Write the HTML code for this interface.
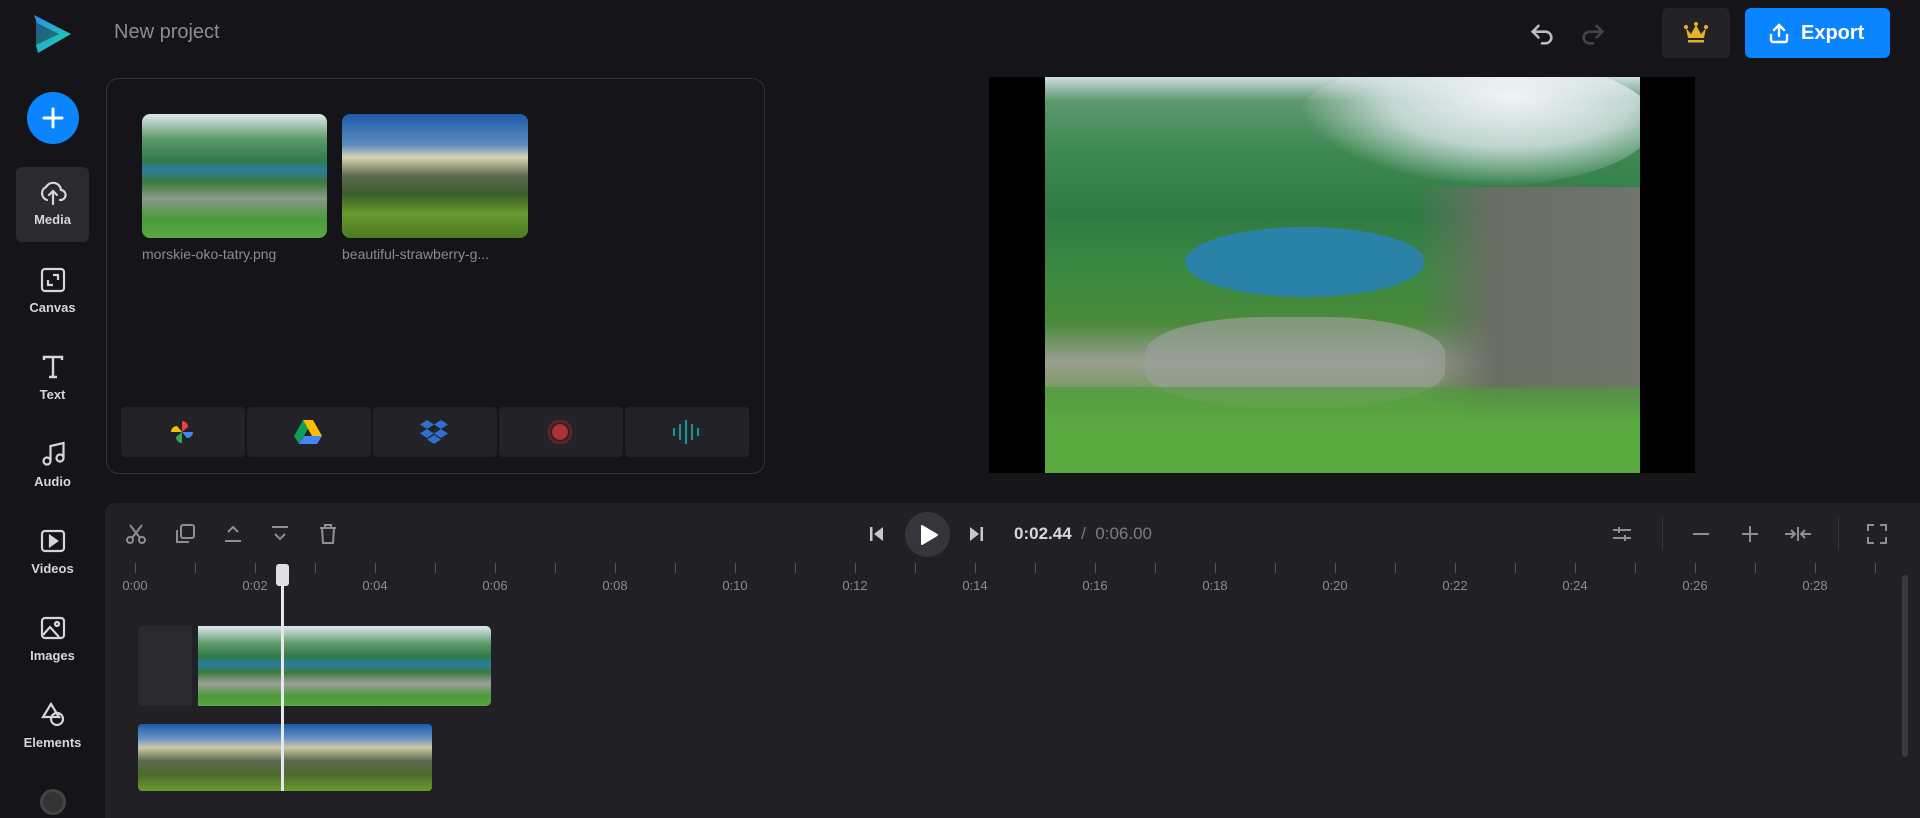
<!DOCTYPE html>
<html><head><meta charset="utf-8"><style>
*{margin:0;padding:0;box-sizing:border-box}
body{width:1920px;height:818px;background:#151519;font-family:"Liberation Sans",sans-serif;overflow:hidden;position:relative;color:#ddd}
.a{position:absolute}
.side{position:absolute;left:16px;width:73px;text-align:center;font-size:13px;font-weight:bold;color:#d6d6da}
.side svg{display:block;margin:0 auto 6px}
.thumb1{background:linear-gradient(180deg,#dfe9ef 0%,#5f9a6a 20%,#2f7a4a 38%,#2a7da0 45%,#3c7a3a 55%,#8a9a8a 68%,#4a9a3a 85%,#5aa840 100%)}
.thumb2{background:linear-gradient(180deg,#1d5aa8 0%,#5c8cc0 25%,#d9d2b0 35%,#5b6a50 50%,#3c5c2a 65%,#6a9a30 80%,#4c7a20 100%)}
.cell{position:absolute;top:0;height:50px;width:124px;background:#222227;border-radius:4px}
.tick{position:absolute;top:563px;width:1px;height:10px;background:#555}
.lbl{position:absolute;top:578px;font-size:13px;color:#8a8a90;transform:translateX(-50%)}
.ic{position:absolute;stroke:#8e8e94;fill:none;stroke-width:2}
</style></head><body>
<svg class="a" style="left:34px;top:15px" width="37" height="38" viewBox="0 0 37 38"><defs><linearGradient id="lg" x1="0" y1="0" x2="1" y2="1"><stop offset="0" stop-color="#2a8cf0"/><stop offset="1" stop-color="#1ed6a0"/></linearGradient></defs><path d="M0 0 L37 19 L4 38 L2 30 L25 19 L3 8 Z" fill="url(#lg)"/><path d="M2 6 L25 19 L2 32 Z" fill="url(#lg)" opacity=".55"/></svg>
<div class="a" style="left:114px;top:21px;font-size:20px;color:#8c8c92">New project</div>
<svg class="a" style="left:1528px;top:20px" width="28" height="28" viewBox="0 0 24 24" fill="none" stroke="#bbb" stroke-width="2.2" stroke-linecap="round"><path d="M9 5 L4 10 L9 15"/><path d="M4 10 H15 a5 5 0 0 1 0 10 H12"/></svg>
<svg class="a" style="left:1579px;top:20px" width="28" height="28" viewBox="0 0 24 24" fill="none" stroke="#444" stroke-width="2.2" stroke-linecap="round"><path d="M15 5 L20 10 L15 15"/><path d="M20 10 H9 a5 5 0 0 0 0 10 H12"/></svg>
<div class="a" style="left:1662px;top:8px;width:68px;height:50px;background:#222227;border-radius:6px"></div>
<svg class="a" style="left:1684px;top:22px" width="24" height="22" viewBox="0 0 24 22"><path d="M2 6 L7 12 L12 3 L17 12 L22 6 L20 16 H4 Z" fill="#e2b02c"/><circle cx="2" cy="5" r="2" fill="#e2b02c"/><circle cx="12" cy="2" r="2" fill="#e2b02c"/><circle cx="22" cy="5" r="2" fill="#e2b02c"/><rect x="4" y="18" width="16" height="2.5" fill="#e2b02c"/></svg>
<div class="a" style="left:1745px;top:8px;width:145px;height:50px;background:#0a84ff;border-radius:6px;color:#fff;font-weight:bold;font-size:20px;line-height:50px;padding-left:56px">Export</div>
<svg class="a" style="left:1768px;top:22px" width="22" height="22" viewBox="0 0 22 22" fill="none" stroke="#fff" stroke-width="2.4" stroke-linecap="round"><path d="M11 14 V3 M6 8 L11 3 L16 8"/><path d="M3 13 V18 a2 2 0 0 0 2 2 H17 a2 2 0 0 0 2 -2 V13"/></svg>
<div class="a" style="left:27px;top:92px;width:52px;height:52px;border-radius:50%;background:#0a84ff"></div>
<svg class="a" style="left:40px;top:105px" width="26" height="26" viewBox="0 0 26 26" stroke="#fff" stroke-width="3" stroke-linecap="round"><path d="M13 4 V22 M4 13 H22"/></svg>
<div class="a" style="left:16px;top:167px;width:73px;height:75px;background:#2a2a2f;border-radius:6px"></div>
<div class="side" style="top:178px"><svg width="30" height="28" viewBox="0 0 30 28" fill="none" stroke="#d6d6da" stroke-width="2.2" stroke-linecap="round"><path d="M9 22 a7 7 0 0 1 -1 -13 a8 8 0 0 1 15 3 a5 5 0 0 1 -1 10"/><path d="M15 26 V13 M11 17 L15 13 L19 17"/></svg>Media</div>
<div class="side" style="top:266px"><svg width="28" height="28" viewBox="0 0 28 28" fill="none" stroke="#d6d6da" stroke-width="2.2"><rect x="3" y="3" width="22" height="22" rx="3"/><path d="M9 14 v5 h5 M19 14 v-5 h-5"/></svg>Canvas</div>
<div class="side" style="top:353px"><svg width="28" height="28" viewBox="0 0 28 28" fill="none" stroke="#d6d6da" stroke-width="2.4"><path d="M5 7 V4 H23 V7 M14 4 V24 M10 24 H18"/></svg>Text</div>
<div class="side" style="top:440px"><svg width="28" height="28" viewBox="0 0 28 28" fill="none" stroke="#d6d6da" stroke-width="2.2"><circle cx="8" cy="21" r="3.5"/><circle cx="21" cy="18" r="3.5"/><path d="M11.5 21 V6 L24.5 3 V18"/></svg>Audio</div>
<div class="side" style="top:527px"><svg width="28" height="28" viewBox="0 0 28 28" fill="none" stroke="#d6d6da" stroke-width="2.2"><rect x="3" y="4" width="22" height="20" rx="3"/><path d="M11 9 L18 14 L11 19 Z" fill="#d6d6da"/></svg>Videos</div>
<div class="side" style="top:614px"><svg width="28" height="28" viewBox="0 0 28 28" fill="none" stroke="#d6d6da" stroke-width="2.2"><rect x="3" y="4" width="22" height="20" rx="3"/><circle cx="18" cy="10" r="2"/><path d="M4 21 L11 13 L20 23"/></svg>Images</div>
<div class="side" style="top:701px"><svg width="28" height="28" viewBox="0 0 28 28" fill="none" stroke="#d6d6da" stroke-width="2.2"><path d="M12 3 L4 16 H20 Z"/><circle cx="18" cy="18" r="6"/></svg>Elements</div>
<div class="a" style="left:40px;top:789px;width:26px;height:26px;border-radius:50%;border:3px solid #444;background:#333"></div>
<div class="a" style="left:106px;top:78px;width:659px;height:396px;border:1px solid #303036;border-radius:13px"></div>
<div class="a thumb1" style="left:142px;top:114px;width:185px;height:124px;border-radius:8px"></div>
<div class="a thumb2" style="left:342px;top:114px;width:186px;height:124px;border-radius:8px"></div>
<div class="a" style="left:142px;top:246px;font-size:14px;color:#8a8a90">morskie-oko-tatry.png</div>
<div class="a" style="left:342px;top:246px;font-size:14px;color:#8a8a90">beautiful-strawberry-g...</div>
<div class="a" style="left:121px;top:407px;width:628px;height:50px">
<div class="cell" style="left:0"></div><div class="cell" style="left:126px"></div><div class="cell" style="left:252px"></div><div class="cell" style="left:378px"></div><div class="cell" style="left:504px"></div>
</div>
<svg class="a" style="left:169px;top:419px" width="26" height="26" viewBox="0 0 26 26"><path d="M13 13 V2 a6 6 0 0 1 6 6 Z" fill="#e94235"/><path d="M13 13 H24 a6 6 0 0 1 -6 6 Z" fill="#4285f4"/><path d="M13 13 V24 a6 6 0 0 1 -6 -6 Z" fill="#34a853"/><path d="M13 13 H2 a6 6 0 0 1 6 -6 Z" fill="#fbbc04"/></svg>
<svg class="a" style="left:294px;top:420px" width="28" height="24" viewBox="0 0 28 24"><path d="M9 0 H19 L28 16 H18 Z" fill="#fbbc04"/><path d="M9 0 L14 9 L5 24 L0 16 Z" fill="#0f9d58"/><path d="M5 24 L10 16 H28 L23 24 Z" fill="#4285f4"/></svg>
<svg class="a" style="left:420px;top:420px" width="28" height="26" viewBox="0 0 28 26" fill="#2f6fcf"><path d="M7 0 L14 4.5 L7 9 L0 4.5Z M21 0 L28 4.5 L21 9 L14 4.5Z M7 9 L14 13.5 L7 18 L0 13.5Z M21 9 L28 13.5 L21 18 L14 13.5Z M14 15 L21 19.5 L14 24 L7 19.5Z"/></svg>
<svg class="a" style="left:547px;top:419px" width="26" height="26" viewBox="0 0 26 26"><circle cx="13" cy="13" r="11" fill="none" stroke="#6a2025" stroke-width="2.5"/><circle cx="13" cy="13" r="8" fill="#a8313a"/></svg>
<svg class="a" style="left:672px;top:420px" width="28" height="24" viewBox="0 0 28 24" stroke="#1e8f96" stroke-width="2.2" stroke-linecap="round"><path d="M2 9 V15 M8 5 V19 M14 1 V23 M20 5 V19 M26 9 V15"/></svg>
<!-- preview -->
<div class="a" style="left:989px;top:77px;width:706px;height:396px;background:#000"></div>
<div class="a" style="left:1045px;top:77px;width:595px;height:396px;overflow:hidden;background:linear-gradient(180deg,#cfdde0 0%,#5e9870 6%,#3f8a54 18%,#2f7a44 35%,#3b8a40 50%,#4a8a3a 62%,#9a9e92 72%,#6a9a4a 82%,#5aa640 100%)">
<div class="a" style="left:250px;top:-20px;width:360px;height:130px;border-radius:50%;background:radial-gradient(ellipse at 60% 30%,#f0f4f6 0%,rgba(220,230,235,.8) 40%,rgba(200,214,220,0) 70%)"></div>
<div class="a" style="left:140px;top:150px;width:240px;height:70px;border-radius:50%;background:#2b82a8"></div>
<div class="a" style="left:370px;top:110px;width:225px;height:250px;background:linear-gradient(90deg,rgba(90,95,85,0),#6a6e64 35%,#70746a 100%)"></div>
<div class="a" style="left:100px;top:240px;width:300px;height:90px;border-radius:40%;background:#9aa09a;opacity:.7"></div>
<div class="a" style="left:0;top:310px;width:595px;height:86px;background:linear-gradient(180deg,rgba(74,154,58,.6),#5aa840 40%)"></div>
</div>
<!-- timeline -->
<div class="a" style="left:105px;top:503px;width:1815px;height:315px;background:#202025;border-top-left-radius:10px"></div>
<svg class="ic" style="left:124px;top:522px" width="24" height="24" viewBox="0 0 24 24" stroke="#505056"><circle cx="6" cy="18" r="3"/><circle cx="18" cy="18" r="3"/><path d="M8 16 L18 3 M16 16 L6 3"/></svg>
<svg class="ic" style="left:173px;top:522px" width="24" height="24" viewBox="0 0 24 24" stroke="#505056"><rect x="8" y="3" width="13" height="13" rx="2"/><path d="M4 8 V20 H16"/></svg>
<svg class="ic" style="left:221px;top:522px" width="24" height="24" viewBox="0 0 24 24" stroke="#505056"><path d="M7 10 L12 5 L17 10 M4 19 H20"/></svg>
<svg class="ic" style="left:268px;top:522px" width="24" height="24" viewBox="0 0 24 24" stroke="#505056"><path d="M7 12 L12 17 L17 12 M4 5 H20"/></svg>
<svg class="ic" style="left:316px;top:522px" width="24" height="24" viewBox="0 0 24 24" stroke="#505056"><path d="M4 6 H20 M9 6 V3 H15 V6 M6 6 L7 21 H17 L18 6"/></svg>
<svg class="a" style="left:868px;top:525px" width="18" height="18" viewBox="0 0 18 18" fill="#c8c8cc"><rect x="2" y="2" width="2.5" height="14"/><path d="M15 2 V16 L6 9Z"/></svg>
<div class="a" style="left:905px;top:512px;width:45px;height:45px;border-radius:50%;background:#35353b"></div>
<svg class="a" style="left:919px;top:524px" width="20" height="22" viewBox="0 0 20 22"><path d="M3 2 L18 11 L3 20Z" fill="#fff" stroke="#fff" stroke-width="2" stroke-linejoin="round"/></svg>
<svg class="a" style="left:967px;top:525px" width="18" height="18" viewBox="0 0 18 18" fill="#c8c8cc"><rect x="13.5" y="2" width="2.5" height="14"/><path d="M3 2 V16 L12 9Z"/></svg>
<div class="a" style="left:1014px;top:524px;font-size:17px;font-weight:bold;color:#d8d8dc">0:02.44 <span style="color:#7c7c82;font-weight:normal">&nbsp;/&nbsp; 0:06.00</span></div>
<svg class="ic" style="left:1610px;top:522px" width="24" height="24" viewBox="0 0 24 24" stroke="#c8c8cc"><path d="M3 8 H21 M3 16 H21 M9 5 V11 M15 13 V19"/></svg>
<div class="a" style="left:1662px;top:518px;width:1px;height:32px;background:#35353b"></div>
<svg class="ic" style="left:1689px;top:522px" width="24" height="24" viewBox="0 0 24 24" stroke="#c8c8cc" stroke-width="2.4"><path d="M4 12 H20"/></svg>
<svg class="ic" style="left:1738px;top:522px" width="24" height="24" viewBox="0 0 24 24" stroke="#c8c8cc" stroke-width="2.4"><path d="M4 12 H20 M12 4 V20"/></svg>
<svg class="ic" style="left:1783px;top:522px" width="30" height="24" viewBox="0 0 30 24" stroke="#c8c8cc" stroke-width="2.2"><path d="M2 12 H12 M8 8 L12 12 L8 16 M28 12 H18 M22 8 L18 12 L22 16 M15 5 V19"/></svg>
<div class="a" style="left:1838px;top:518px;width:1px;height:32px;background:#35353b"></div>
<svg class="ic" style="left:1865px;top:522px" width="24" height="24" viewBox="0 0 24 24" stroke="#c8c8cc" stroke-width="2.2"><path d="M3 9 V3 H9 M15 3 H21 V9 M21 15 V21 H15 M9 21 H3 V15"/></svg>
<div class="tick" style="left:135px"></div><div class="tick" style="left:195px"></div><div class="tick" style="left:255px"></div><div class="tick" style="left:315px"></div><div class="tick" style="left:375px"></div><div class="tick" style="left:435px"></div><div class="tick" style="left:495px"></div><div class="tick" style="left:555px"></div><div class="tick" style="left:615px"></div><div class="tick" style="left:675px"></div><div class="tick" style="left:735px"></div><div class="tick" style="left:795px"></div><div class="tick" style="left:855px"></div><div class="tick" style="left:915px"></div><div class="tick" style="left:975px"></div><div class="tick" style="left:1035px"></div><div class="tick" style="left:1095px"></div><div class="tick" style="left:1155px"></div><div class="tick" style="left:1215px"></div><div class="tick" style="left:1275px"></div><div class="tick" style="left:1335px"></div><div class="tick" style="left:1395px"></div><div class="tick" style="left:1455px"></div><div class="tick" style="left:1515px"></div><div class="tick" style="left:1575px"></div><div class="tick" style="left:1635px"></div><div class="tick" style="left:1695px"></div><div class="tick" style="left:1755px"></div><div class="tick" style="left:1815px"></div><div class="tick" style="left:1875px"></div>
<div class="lbl" style="left:135px">0:00</div><div class="lbl" style="left:255px">0:02</div><div class="lbl" style="left:375px">0:04</div><div class="lbl" style="left:495px">0:06</div><div class="lbl" style="left:615px">0:08</div><div class="lbl" style="left:735px">0:10</div><div class="lbl" style="left:855px">0:12</div><div class="lbl" style="left:975px">0:14</div><div class="lbl" style="left:1095px">0:16</div><div class="lbl" style="left:1215px">0:18</div><div class="lbl" style="left:1335px">0:20</div><div class="lbl" style="left:1455px">0:22</div><div class="lbl" style="left:1575px">0:24</div><div class="lbl" style="left:1695px">0:26</div><div class="lbl" style="left:1815px">0:28</div>
<div class="a" style="left:138px;top:626px;width:54px;height:80px;background:#2a2a2f;border-radius:4px 0 0 4px"></div>
<div class="a" style="left:198px;top:626px;width:293px;height:80px;border-radius:0 5px 5px 0;background:linear-gradient(180deg,#dfe9ef 0%,#5f9a6a 22%,#2f7a4a 38%,#2a7da0 48%,#3c7a3a 58%,#9aa09a 72%,#4a9a3a 88%,#5aa840 100%)"></div>
<div class="a" style="left:138px;top:724px;width:294px;height:67px;border-radius:4px;background:linear-gradient(180deg,#1d5aa8 0%,#6a94c4 22%,#cfc8a8 35%,#5b6a50 55%,#4c6a2a 75%,#6a9a30 100%)"></div>
<div class="a" style="left:281px;top:566px;width:3px;height:225px;background:#e8e8ec"></div>
<div class="a" style="left:276px;top:564px;width:13px;height:22px;background:#e0e0e4;border-radius:3px"></div>
<div class="a" style="left:1902px;top:575px;width:6px;height:182px;background:#3a3a40;border-radius:3px"></div>
</body></html>
